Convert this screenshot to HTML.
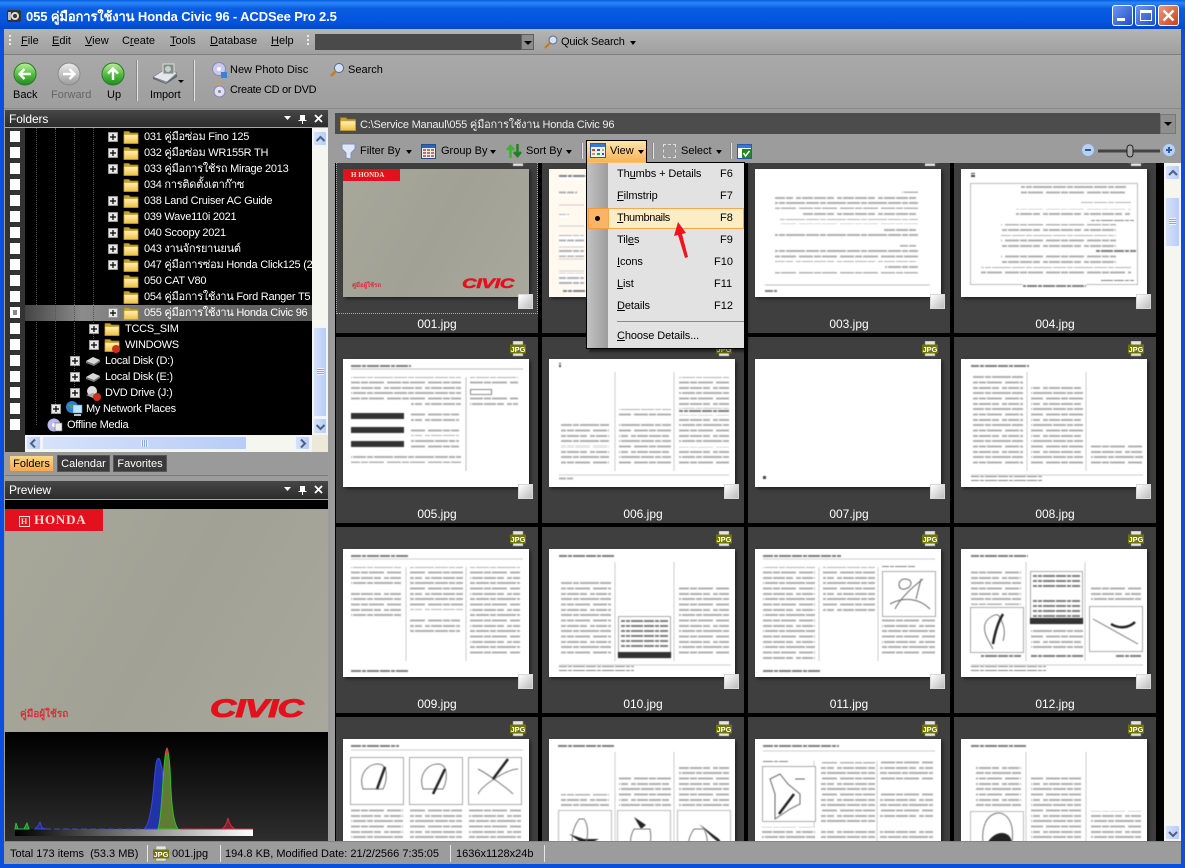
<!DOCTYPE html>
<html><head><meta charset="utf-8"><title>055 คู่มือการใช้งาน Honda Civic 96 - ACDSee Pro 2.5</title>
<style>
html,body{margin:0;padding:0;width:1185px;height:868px;overflow:hidden;background:#9c9c9c;font-family:"Liberation Sans","DejaVu Sans","Noto Sans CJK SC",sans-serif;font-size:11px}
div,span,svg{box-sizing:border-box}
.a{position:absolute}
.l{position:absolute;white-space:nowrap;line-height:14px;color:#000}
.w{color:#fff}
u{text-decoration:underline}
.hd{position:absolute;background:linear-gradient(#474747,#2c2c2c);border-bottom:1px solid #aaa;color:#fff;line-height:18px;padding-left:4px;font-size:12px;letter-spacing:-.1px}
.cell{position:absolute;width:202px;height:186px;background:#3f3f3f}
.pg{position:absolute;left:7px;top:22px;width:186px;height:128px;background:#fff;box-shadow:2px 2px 3px #222;display:block}
svg.pg>*{filter:blur(.4px)}
.ck{position:absolute;left:182px;top:147px;width:15px;height:15px;background:linear-gradient(135deg,#fff,#bcbcbc);border:1px solid #d8d8d8}
.lb{position:absolute;left:0;width:202px;top:170px;text-align:center;color:#fff;line-height:14px;font-size:12px}
.bd{position:absolute;left:174px;top:4px;width:16px;height:16px}
.tc{position:absolute;left:10px;width:10px;height:11px;background:#fff}
.tx{position:absolute;white-space:nowrap;color:#fff;line-height:16px;height:16px;letter-spacing:-.25px}
.ic{position:absolute;width:16px;height:14px}
.pl{position:absolute;width:10px;height:10px}
.sb{background:linear-gradient(90deg,#d6e2fb,#b8ccf6);border:1px solid #eef3fe;border-radius:2px}
.mi{position:absolute;left:617px;white-space:nowrap;line-height:14px;color:#000;letter-spacing:-.1px}
.ms{position:absolute;white-space:nowrap;line-height:14px;color:#000}
.sep{position:absolute;width:2px;background:#e4e4e4;border-left:1px solid #888}
</style></head><body>
<svg width="0" height="0" style="position:absolute"><defs>
<pattern id="t" width="41" height="16" patternUnits="userSpaceOnUse"><rect width="41" height="16" fill="#fff"/><path d="M0 2h9M10 2h13M24 2h6M31 2h10M3 7.500h14M18 7.500h7M26 7.500h15M0 13h5M6 13h11M18 13h12M31 13h7" stroke="#b0b0b0" stroke-width="2" fill="none"/></pattern>
<pattern id="d" width="29" height="5" patternUnits="userSpaceOnUse"><rect width="29" height="5" fill="#fff"/><path d="M0 2h7M8 2h10M19 2h4M24 2h5" stroke="#808080" stroke-width="2" fill="none"/></pattern>
<pattern id="h" width="5" height="3" patternUnits="userSpaceOnUse"><rect width="5" height="3" fill="#fff"/><rect y="0" width="4" height="2" fill="#444"/></pattern>
<linearGradient id="fg" x1="0" y1="0" x2="0" y2="1"><stop offset="0" stop-color="#fff4bc"/><stop offset="1" stop-color="#f0c040"/></linearGradient>
<linearGradient id="gb" x1="0" y1="0" x2="0" y2="1"><stop offset="0" stop-color="#bdf0a0"/><stop offset=".5" stop-color="#55c040"/><stop offset="1" stop-color="#1f8a22"/></linearGradient>
<linearGradient id="gg" x1="0" y1="0" x2="0" y2="1"><stop offset="0" stop-color="#ececec"/><stop offset="1" stop-color="#9b9b9b"/></linearGradient>
<symbol id="fo" viewBox="0 0 16 14"><path d="M1 1.500h5l1.500 1.500H15v10H1z" fill="#c9a032" stroke="#9a7a20" stroke-width=".7"/><path d="M1 4.500h14v9H1z" fill="url(#fg)" stroke="#c89f30" stroke-width=".7"/></symbol>
<symbol id="pb" viewBox="0 0 10 10"><rect x=".5" y=".5" width="9" height="9" fill="#e8e8e8" stroke="#9a9a9a"/><path d="M2 5h6M5 2v6" stroke="#000" stroke-width="1.200"/></symbol>
<symbol id="jp" viewBox="0 0 16 16"><rect x="3" y="0" width="10" height="15" fill="#e4e4e4" stroke="#8a8a8a" stroke-width=".6"/><rect x="0" y="3.500" width="16" height="9" fill="#727400"/><text x="8" y="11" font-family="Liberation Sans" font-weight="bold" font-size="7.500" fill="#fff" text-anchor="middle">JPG</text></symbol>
<symbol id="dk" viewBox="0 0 16 10"><path d="M1 5l7-4 7 3-6 5z" fill="#d8d8d8"/><path d="M1 5l8 3 6-4v2l-6 4-8-3z" fill="#777"/></symbol>
</defs></svg>

<!-- title bar -->
<div class="a" style="left:0;top:0;width:1185px;height:29px;background:linear-gradient(#0a5fe0,#2a86f7 10%,#0a5ce0 30%,#0354e0 75%,#0447c8)"></div>
<div class="a" style="left:0;top:29px;width:4px;height:839px;background:#0a50e0"></div>
<div class="a" style="left:1181px;top:29px;width:4px;height:839px;background:#0a50e0"></div>
<div class="a" style="left:0;top:864px;width:1185px;height:4px;background:#0a50e0"></div>
<svg class="a" style="left:6px;top:8px" width="16" height="16"><rect x="1" y="2" width="14" height="12" rx="2" fill="#333"/><circle cx="9" cy="8" r="4" fill="#ddd"/><circle cx="9" cy="8" r="2" fill="#333"/><rect x="2" y="4" width="3" height="8" fill="#bbb"/></svg>
<div class="l w" style="left:26px;top:8px;font-size:13px;font-weight:bold;line-height:17px;letter-spacing:-.12px">055 คู่มือการใช้งาน Honda Civic 96 - ACDSee Pro 2.5</div>
<div class="a" style="left:1112px;top:5px;width:21px;height:21px;border:1px solid #fff;border-radius:3px;background:linear-gradient(135deg,#6e96ee,#2050c8)"><div class="a" style="left:4px;top:12px;width:8px;height:3px;background:#fff"></div></div>
<div class="a" style="left:1135px;top:5px;width:21px;height:21px;border:1px solid #fff;border-radius:3px;background:linear-gradient(135deg,#6e96ee,#2050c8)"><div class="a" style="left:4px;top:4px;width:12px;height:11px;border:1px solid #fff;border-top-width:3px"></div></div>
<div class="a" style="left:1158px;top:5px;width:21px;height:21px;border:1px solid #fff;border-radius:3px;background:linear-gradient(135deg,#ee9a80,#c8401c)"><svg class="a" style="left:3px;top:3px" width="13" height="13"><path d="M1.500 1.500l10 10M11.500 1.500l-10 10" stroke="#fff" stroke-width="2.400"/></svg></div>

<!-- menu bar -->
<div class="a" style="left:4px;top:29px;width:1177px;height:26px;background:linear-gradient(#b5b5b5,#9f9f9f);border-bottom:1px solid #7f7f7f"></div>
<div class="a" style="left:9px;top:35px;width:2px;height:11px;background:repeating-linear-gradient(#eee 0 2px,transparent 2px 4px)"></div>
<div class="a" style="left:307px;top:35px;width:2px;height:11px;background:repeating-linear-gradient(#eee 0 2px,transparent 2px 4px)"></div>
<div class="l" style="left:21px;top:34px"><u>F</u>ile</div>
<div class="l" style="left:52px;top:34px"><u>E</u>dit</div>
<div class="l" style="left:85px;top:34px"><u>V</u>iew</div>
<div class="l" style="left:122px;top:34px">C<u>r</u>eate</div>
<div class="l" style="left:170px;top:34px"><u>T</u>ools</div>
<div class="l" style="left:210px;top:34px"><u>D</u>atabase</div>
<div class="l" style="left:271px;top:34px"><u>H</u>elp</div>
<div class="a" style="left:315px;top:34px;width:206px;height:16px;background:#4a4a4a"></div>
<div class="a" style="left:521px;top:34px;width:13px;height:16px;background:#8c8c8c;border:1px solid #5f5f5f"><div class="a" style="left:2px;top:6px;border:4px solid transparent;border-top:4px solid #000;border-bottom:0"></div></div>
<svg class="a" style="left:543px;top:34px" width="16" height="16"><circle cx="10" cy="6" r="4" fill="#cfe3ff" stroke="#667" stroke-width="1"/><path d="M7 9l-5 5" stroke="#c08020" stroke-width="2.400"/></svg>
<div class="l" style="left:561px;top:35px;letter-spacing:-.2px">Quick Search</div>
<div class="a" style="left:630px;top:41px;border:3.500px solid transparent;border-top:4px solid #000;border-bottom:0"></div>

<!-- main toolbar -->
<div class="a" style="left:4px;top:55px;width:1177px;height:54px;background:linear-gradient(#a9a9a9,#9e9e9e);border-bottom:1px solid #8a8a8a"></div>
<svg class="a" style="left:12px;top:61px" width="26" height="26"><circle cx="13" cy="13" r="11" fill="url(#gb)" stroke="#2a7a28"/><path d="M19 13H8M12.500 8L7.500 13l5 5" fill="none" stroke="#fff" stroke-width="2.400"/></svg>
<svg class="a" style="left:56px;top:61px" width="26" height="26"><circle cx="13" cy="13" r="11" fill="url(#gg)" stroke="#8a8a8a"/><path d="M7 13h11M13.500 8l5 5-5 5" fill="none" stroke="#fff" stroke-width="2.400"/></svg>
<svg class="a" style="left:100px;top:61px" width="26" height="26"><circle cx="13" cy="13" r="11" fill="url(#gb)" stroke="#2a7a28"/><path d="M13 19V8M8 12.500l5-5 5 5" fill="none" stroke="#fff" stroke-width="2.400"/></svg>
<div class="l" style="left:13px;top:88px">Back</div>
<div class="l" style="left:51px;top:88px;color:#666">Forward</div>
<div class="l" style="left:107px;top:88px">Up</div>
<div class="sep" style="left:136px;top:60px;height:41px"></div>
<svg class="a" style="left:151px;top:62px" width="34" height="26"><path d="M2 15l14-9 10 5-10 9z" fill="#e4e8ec" stroke="#778" stroke-width=".6"/><path d="M2 15l13 6 11-9v3l-11 7-13-5z" fill="#5e6a70"/><rect x="12" y="2" width="11" height="10" fill="#7f8f8a" stroke="#ddd"/><circle cx="17" cy="7" r="3" fill="#ccc"/></svg>
<div class="a" style="left:178px;top:80px;border:3px solid transparent;border-top:3px solid #000;border-bottom:0"></div>
<div class="l" style="left:150px;top:88px;letter-spacing:-.1px">Import</div>
<div class="sep" style="left:193px;top:60px;height:41px"></div>
<svg class="a" style="left:211px;top:62px" width="16" height="16"><circle cx="8" cy="7" r="6.500" fill="#c8c8f0" stroke="#8888b0"/><circle cx="8" cy="7" r="2" fill="#fff"/><rect x="10" y="10" width="6" height="6" fill="#4080d0"/></svg>
<div class="l" style="left:230px;top:63px">New Photo Disc</div>
<svg class="a" style="left:329px;top:62px" width="16" height="16"><circle cx="10" cy="6" r="4.500" fill="#cfe3ff" stroke="#667"/><path d="M7 9l-5 5" stroke="#c08020" stroke-width="2.600"/></svg>
<div class="l" style="left:348px;top:63px">Search</div>
<svg class="a" style="left:212px;top:82px" width="15" height="16"><circle cx="7.500" cy="9.500" r="5.500" fill="#e0e0f4" stroke="#8888b0"/><circle cx="7.500" cy="9.500" r="1.500" fill="#889"/><path d="M7 0l1.500 4-3-.5z" fill="#e8a020"/></svg>
<div class="l" style="left:230px;top:83px;letter-spacing:-.3px">Create CD or DVD</div>

<!-- left panel -->
<div class="hd" style="left:5px;top:110px;width:323px;height:18px">Folders</div>
<svg class="a" style="left:284px;top:113px" width="44" height="13"><path d="M0 3h7l-3.500 4z" fill="#fff"/><path d="M16 2h5v5h1.500v1H19v3h-1V8h-3.500V7H16z" fill="#fff"/><path d="M31 2l7 7M38 2l-7 7" stroke="#fff" stroke-width="1.800"/></svg>
<div class="a" style="left:5px;top:128px;width:20px;height:307px;background:#333"></div>
<div class="a" style="left:5px;top:435px;width:20px;height:17px;background:#333"></div>
<div class="a" style="left:25px;top:128px;width:287px;height:307px;background:#000"></div>
<div class="a" style="left:25px;top:305px;width:287px;height:16px;background:linear-gradient(90deg,#444,#8c8c8c 20%,#6a6a6a 50%,#5c5c5c)"></div>
<div class="a" style="left:55px;top:128px;width:1px;height:280px;border-left:1px dotted #555"></div>
<div class="a" style="left:74px;top:128px;width:1px;height:265px;border-left:1px dotted #555"></div>
<div class="a" style="left:93px;top:128px;width:1px;height:217px;border-left:1px dotted #555"></div>
<div class="a" style="left:36px;top:128px;width:1px;height:297px;border-left:1px dotted #555"></div>

<div class="tc" style="top:131px"></div><div class="tc" style="top:147px"></div><div class="tc" style="top:163px"></div><div class="tc" style="top:179px"></div><div class="tc" style="top:195px"></div><div class="tc" style="top:211px"></div><div class="tc" style="top:227px"></div><div class="tc" style="top:243px"></div><div class="tc" style="top:259px"></div><div class="tc" style="top:275px"></div><div class="tc" style="top:291px"></div>
<div class="tc" style="top:307px"><div class="a" style="left:3px;top:3px;width:4px;height:5px;background:#888"></div></div>
<div class="tc" style="top:323px"></div><div class="tc" style="top:339px"></div><div class="tc" style="top:355px"></div><div class="tc" style="top:371px"></div><div class="tc" style="top:387px"></div><div class="tc" style="top:403px"></div><div class="tc" style="top:419px"></div>

<svg class="pl" style="left:108px;top:132px"><use href="#pb"/></svg><svg class="ic" style="left:123px;top:130px"><use href="#fo"/></svg><div class="tx" style="left:144px;top:129px">031 คู่มือซ่อม Fino 125</div>
<svg class="pl" style="left:108px;top:148px"><use href="#pb"/></svg><svg class="ic" style="left:123px;top:146px"><use href="#fo"/></svg><div class="tx" style="left:144px;top:145px">032 คู่มือซ่อม WR155R TH</div>
<svg class="pl" style="left:108px;top:164px"><use href="#pb"/></svg><svg class="ic" style="left:123px;top:162px"><use href="#fo"/></svg><div class="tx" style="left:144px;top:161px">033 คู่มือการใช้รถ Mirage 2013</div>
<svg class="ic" style="left:123px;top:178px"><use href="#fo"/></svg><div class="tx" style="left:144px;top:177px">034 การติดตั้งเตาก๊าซ</div>
<svg class="pl" style="left:108px;top:196px"><use href="#pb"/></svg><svg class="ic" style="left:123px;top:194px"><use href="#fo"/></svg><div class="tx" style="left:144px;top:193px">038 Land Cruiser AC Guide</div>
<svg class="pl" style="left:108px;top:212px"><use href="#pb"/></svg><svg class="ic" style="left:123px;top:210px"><use href="#fo"/></svg><div class="tx" style="left:144px;top:209px">039 Wave110i 2021</div>
<svg class="pl" style="left:108px;top:228px"><use href="#pb"/></svg><svg class="ic" style="left:123px;top:226px"><use href="#fo"/></svg><div class="tx" style="left:144px;top:225px">040 Scoopy 2021</div>
<svg class="pl" style="left:108px;top:244px"><use href="#pb"/></svg><svg class="ic" style="left:123px;top:242px"><use href="#fo"/></svg><div class="tx" style="left:144px;top:241px">043 งานจักรยานยนต์</div>
<svg class="pl" style="left:108px;top:260px"><use href="#pb"/></svg><svg class="ic" style="left:123px;top:258px"><use href="#fo"/></svg><div class="tx" style="left:144px;top:257px;width:168px;overflow:hidden">047 คู่มือการซ่อม Honda Click125 (2</div>
<svg class="ic" style="left:123px;top:274px"><use href="#fo"/></svg><div class="tx" style="left:144px;top:273px">050 CAT V80</div>
<svg class="ic" style="left:123px;top:290px"><use href="#fo"/></svg><div class="tx" style="left:144px;top:289px;width:168px;overflow:hidden">054 คู่มือการใช้งาน Ford Ranger T5</div>
<svg class="pl" style="left:108px;top:308px"><use href="#pb"/></svg><svg class="ic" style="left:123px;top:306px"><use href="#fo"/></svg><div class="tx" style="left:144px;top:305px">055 คู่มือการใช้งาน Honda Civic 96</div>
<svg class="pl" style="left:89px;top:324px"><use href="#pb"/></svg><svg class="ic" style="left:104px;top:322px"><use href="#fo"/></svg><div class="tx" style="left:125px;top:321px">TCCS_SIM</div>
<svg class="pl" style="left:89px;top:340px"><use href="#pb"/></svg><svg class="ic" style="left:104px;top:338px"><use href="#fo"/></svg><div class="a" style="left:112px;top:345px;width:8px;height:8px;border-radius:50%;background:#d03018"></div><div class="tx" style="left:125px;top:337px">WINDOWS</div>
<svg class="pl" style="left:70px;top:356px"><use href="#pb"/></svg><svg class="ic" style="left:85px;top:356px;height:10px"><use href="#dk"/></svg><div class="tx" style="left:105px;top:353px">Local Disk (D:)</div>
<svg class="pl" style="left:70px;top:372px"><use href="#pb"/></svg><svg class="ic" style="left:85px;top:372px;height:10px"><use href="#dk"/></svg><div class="tx" style="left:105px;top:369px">Local Disk (E:)</div>
<svg class="pl" style="left:70px;top:388px"><use href="#pb"/></svg><svg class="a" style="left:85px;top:385px" width="16" height="16"><circle cx="7" cy="6" r="5" fill="#ddd"/><path d="M1 10l7-2 6 2-6 3z" fill="#aaa"/><circle cx="12" cy="12" r="4" fill="#d03018"/></svg><div class="tx" style="left:105px;top:385px">DVD Drive (J:)</div>
<svg class="pl" style="left:51px;top:404px"><use href="#pb"/></svg><svg class="a" style="left:65px;top:400px" width="18" height="18"><circle cx="7" cy="7" r="6" fill="#2f7fd0"/><path d="M3 4l5 1-2 4z" fill="#3fb040"/><rect x="8" y="5" width="9" height="8" fill="#bfe6ff" stroke="#5a90c0" stroke-width=".6"/><rect x="9" y="14" width="7" height="2" fill="#c0c0c0"/></svg><div class="tx" style="left:86px;top:401px">My Network Places</div>
<svg class="a" style="left:47px;top:417px" width="16" height="16"><circle cx="7" cy="8" r="6.500" fill="#b8b8ea"/><circle cx="7" cy="8" r="2" fill="#fff"/><rect x="8" y="6" width="7" height="8" fill="#eee" stroke="#667" stroke-width=".6"/></svg><div class="tx" style="left:67px;top:417px">Offline Media</div>

<!-- tree scrollbars -->
<div class="a" style="left:312px;top:128px;width:16px;height:307px;background:#f6f6f0"></div>
<div class="a sb" style="left:313px;top:131px;width:14px;height:15px"><svg class="a" style="left:1px;top:3px" width="11" height="8"><path d="M1.500 6L5.500 2l4 4" fill="none" stroke="#4d6185" stroke-width="2"/></svg></div>
<div class="a sb" style="left:313px;top:327px;width:14px;height:90px"><div class="a" style="left:3px;top:40px;width:7px;height:7px;background:repeating-linear-gradient(#eef3fe 0 1px,#8ea6d8 1px 2px)"></div></div>
<div class="a sb" style="left:313px;top:418px;width:14px;height:16px"><svg class="a" style="left:1px;top:4px" width="11" height="8"><path d="M1.500 2l4 4 4-4" fill="none" stroke="#4d6185" stroke-width="2"/></svg></div>
<div class="a" style="left:25px;top:435px;width:303px;height:17px;background:#f6f6f0"></div>
<div class="a sb" style="left:26px;top:436px;width:15px;height:14px"><svg class="a" style="left:2px;top:1px" width="8" height="11"><path d="M6 1.500l-4 4 4 4" fill="none" stroke="#4d6185" stroke-width="2"/></svg></div>
<div class="a sb" style="left:42px;top:436px;width:205px;height:14px"><div class="a" style="left:98px;top:3px;width:7px;height:7px;background:repeating-linear-gradient(90deg,#eef3fe 0 1px,#8ea6d8 1px 2px)"></div></div>
<div class="a sb" style="left:295px;top:436px;width:15px;height:14px"><svg class="a" style="left:3px;top:1px" width="8" height="11"><path d="M2 1.500l4 4-4 4" fill="none" stroke="#4d6185" stroke-width="2"/></svg></div>
<div class="a" style="left:312px;top:435px;width:16px;height:17px;background:#ece9d8"></div>

<div class="a" style="left:5px;top:452px;width:323px;height:24px;background:#9a9a9a;border-bottom:1px solid #7d7d7d"></div>
<div class="l" style="left:9px;top:455px;width:45px;height:17px;background:linear-gradient(#ffd68a,#f7a94a);border:1px solid #c89040;text-align:center;line-height:16px">Folders</div>
<div class="l w" style="left:57px;top:455px;width:53px;height:17px;background:#3a3a3a;border:1px solid #555;text-align:center;line-height:16px">Calendar</div>
<div class="l w" style="left:113px;top:455px;width:54px;height:17px;background:#3a3a3a;border:1px solid #555;text-align:center;line-height:16px">Favorites</div>

<!-- preview -->
<div class="hd" style="left:5px;top:481px;width:323px;height:19px;line-height:19px">Preview</div>
<svg class="a" style="left:284px;top:484px" width="44" height="13"><path d="M0 3h7l-3.500 4z" fill="#fff"/><path d="M16 2h5v5h1.500v1H19v3h-1V8h-3.500V7H16z" fill="#fff"/><path d="M31 2l7 7M38 2l-7 7" stroke="#fff" stroke-width="1.800"/></svg>
<div class="a" style="left:5px;top:500px;width:323px;height:341px;background:#000;overflow:hidden">
  <div class="a" style="left:0;top:9px;width:323px;height:223px;background:linear-gradient(120deg,#a7a79a,#a1a195 50%,#a8a89c)"></div>
  <div class="a" style="left:0;top:9px;width:98px;height:22px;background:#e3111d"></div>
  <div class="l" style="left:14px;top:13px;font-family:'Liberation Serif';font-weight:bold;font-size:13px;color:#f8dcd0;letter-spacing:.8px"><span style="border:1px solid #f8dcd0;padding:0 1px;font-size:8px">H</span> HONDA</div>
  <div class="l" style="left:205px;top:195px;font-size:25px;line-height:28px;font-weight:bold;font-style:italic;color:#e3111d;-webkit-text-stroke:1px #e3111d;transform:scaleX(1.45);transform-origin:0 0;letter-spacing:-.5px">CIVIC</div>
  <div class="l" style="left:15px;top:208px;color:#d8303a;font-size:10px;font-weight:bold">คู่มือผู้ใช้รถ</div>
  <svg class="a" style="left:0;top:232px" width="323" height="109">
    <defs><linearGradient id="hb" x1="0" y1="0" x2="0" y2="1"><stop offset="0" stop-color="#000"/><stop offset="1" stop-color="#2e2e2e"/></linearGradient><linearGradient id="hg"><stop offset="0" stop-color="#000"/><stop offset="1" stop-color="#fff"/></linearGradient></defs>
    <rect width="323" height="109" fill="url(#hb)"/>
    <rect x="10" y="97" width="238" height="7" fill="url(#hg)"/>
    <path d="M139 97c4-3 7-15 9-35 2-18 2-30 4-34s3-1 5 8c2 18 2 45 6 61z" fill="#2232a8" stroke="#3a48e0"/>
    <path d="M153 97c3-10 4-35 6-62 1-12 2-19 3-19s2 8 3 20c1 27 2 52 8 61z" fill="#5f7c30" stroke="#30c030"/>
    <path d="M162 15l-2 6h4z" fill="#e03030"/>
    <path d="M217 97c3-2 5-6 6-11 1 5 3 9 7 11z" fill="#802030" stroke="#d03040"/>
    <path d="M10 97l1-6 2 6h6l3-6 2 6z" fill="#208030" stroke="#30c040"/>
    <path d="M30 97l3-3 2-4 2 6 4 1z" fill="#223088" stroke="#3a48d0"/>
    <path d="M40 97h100" stroke="#3a48d0" stroke-dasharray="6 3"/>
    <path d="M175 97h45M228 97h20" stroke="#c03040"/>
  </svg>
</div>

<!-- address bar -->
<div class="a" style="left:335px;top:113px;width:825px;height:21px;background:#4c4c4c"></div>
<svg class="a" style="left:339px;top:116px;width:18px;height:15px"><use href="#fo"/></svg>
<div class="l" style="left:360px;top:118px;color:#eee;letter-spacing:-.2px">C:\Service Manaul\055 คู่มือการใช้งาน Honda Civic 96</div>
<div class="a" style="left:1160px;top:114px;width:16px;height:20px;background:#8f8f8f;border:1px solid #777"><div class="a" style="left:3px;top:7px;border:4px solid transparent;border-top:4px solid #000;border-bottom:0"></div></div>

<!-- view toolbar -->
<svg class="a" style="left:341px;top:143px" width="15" height="17"><path d="M1 1h13v5l-4 4v6l-5-1v-5L1 6z" fill="#dfe7f8" stroke="#7f90c0"/></svg>
<div class="l" style="left:360px;top:144px">Filter By</div>
<div class="a" style="left:406px;top:150px;border:3.500px solid transparent;border-top:4px solid #000;border-bottom:0"></div>
<svg class="a" style="left:421px;top:144px" width="15" height="15"><rect x=".5" y=".5" width="14" height="14" fill="#e8f0ff" stroke="#2a4a90"/><rect x="1" y="1" width="13" height="3" fill="#3060c0"/><path d="M2 6h11M2 9h11M2 12h11" stroke="#c04020" stroke-width="1.500" stroke-dasharray="3 1"/></svg>
<div class="l" style="left:441px;top:144px">Group By</div>
<div class="a" style="left:490px;top:150px;border:3.500px solid transparent;border-top:4px solid #000;border-bottom:0"></div>
<svg class="a" style="left:506px;top:143px" width="16" height="16"><path d="M4.500 15V5M1 7l3.500-4L8 7" fill="none" stroke="#40b030" stroke-width="2.500"/><path d="M11.500 1v10M8 9l3.500 4L15 9" fill="none" stroke="#20801c" stroke-width="2.500"/></svg>
<div class="l" style="left:526px;top:144px">Sort By</div>
<div class="a" style="left:566px;top:150px;border:3.500px solid transparent;border-top:4px solid #000;border-bottom:0"></div>
<div class="sep" style="left:581px;top:143px;height:16px"></div>
<div class="a" style="left:586px;top:140px;width:61px;height:23px;background:linear-gradient(#ffe6b0,#f8b050);border:1px solid #000;border-bottom:0"></div>
<svg class="a" style="left:590px;top:143px" width="16" height="15"><rect x=".5" y=".5" width="15" height="14" fill="#eaf2ff" stroke="#2a5ab0"/><rect x="1" y="1" width="14" height="3" fill="#3878d0"/><rect x="2" y="6" width="3" height="2" fill="#e04020"/><rect x="7" y="6" width="3" height="2" fill="#2060c0"/><rect x="12" y="6" width="2" height="2" fill="#e0a020"/><rect x="2" y="10" width="3" height="2" fill="#e0a020"/><rect x="7" y="10" width="3" height="2" fill="#30a030"/><rect x="12" y="10" width="2" height="2" fill="#2060c0"/></svg>
<div class="l" style="left:610px;top:144px">View</div>
<div class="a" style="left:638px;top:150px;border:3.500px solid transparent;border-top:4px solid #000;border-bottom:0"></div>
<div class="sep" style="left:652px;top:143px;height:16px"></div>
<div class="a" style="left:663px;top:144px;width:13px;height:14px;border:1px dashed #ddd"></div>
<div class="l" style="left:681px;top:144px">Select</div>
<div class="a" style="left:716px;top:150px;border:3.500px solid transparent;border-top:4px solid #000;border-bottom:0"></div>
<div class="sep" style="left:730px;top:143px;height:16px"></div>
<svg class="a" style="left:737px;top:144px" width="15" height="15"><rect x=".5" y=".5" width="14" height="14" fill="#fff" stroke="#2a5ab0"/><rect x="1" y="1" width="13" height="3" fill="#3878d0"/><rect x="5" y="5" width="9" height="9" fill="#1f8a22"/><path d="M6.500 9l2 3 4-5" fill="none" stroke="#fff" stroke-width="1.500"/></svg>
<svg class="a" style="left:1080px;top:142px" width="100" height="17"><circle cx="8" cy="8" r="6.500" fill="#bcd0ec" stroke="#8aa0c0"/><path d="M5 8h6" stroke="#1f5fa8" stroke-width="2"/><path d="M18 9h62" stroke="#444" stroke-width="3"/><rect x="47" y="3" width="6" height="12" rx="3" fill="#a8a8a8" stroke="#222"/><circle cx="89" cy="8" r="6.500" fill="#bcd0ec" stroke="#8aa0c0"/><path d="M86 8h6M89 5v6" stroke="#1f5fa8" stroke-width="2"/></svg>

<!-- grid -->
<div class="a" style="left:335px;top:163px;width:829px;height:678px;background:#000;overflow:hidden">
<div class="cell" style="left:1px;top:-16px"><div class="pg" style="background:linear-gradient(120deg,#a7a79a,#a1a195 50%,#a8a89c)"><div class="a" style="left:0;top:0;width:57px;height:12px;background:#e3111d"></div><div class="l" style="left:8px;top:0;color:#f8dcd0;font-family:'Liberation Serif';font-weight:bold;font-size:7px;line-height:12px">H HONDA</div><div class="l" style="left:119px;top:106px;font-size:14px;line-height:16px;font-weight:bold;font-style:italic;color:#e3111d;-webkit-text-stroke:.5px #e3111d;transform:scaleX(1.450);transform-origin:0 0;letter-spacing:-.3px">CIVIC</div><div class="l" style="left:9px;top:112px;color:#d8303a;font-size:6px;line-height:10px;font-weight:bold">คู่มือผู้ใช้รถ</div></div><div class="a" style="left:0;top:0;width:202px;height:167px;border:1px dotted #aaa"></div><svg class="bd"><use href="#jp"/></svg><div class="ck"></div><div class="lb">001.jpg</div></div>

<div class="cell" style="left:207px;top:-16px"><svg class="pg" viewBox="0 0 186 128" style="background:#fff9ef"><rect x="10" y="6" width="28" height="5" fill="url(#d)"/><rect x="10" y="22" width="18" height="4" fill="url(#t)"/><path d="M10 36h25M10 57h25M10 78h25M10 90h25M10 102h25" stroke="#ccc"/><rect x="10" y="45" width="10" height="4" fill="url(#t)"/><rect x="10" y="66" width="25" height="10" fill="url(#t)"/><rect x="10" y="80" width="25" height="8" fill="url(#t)"/><rect x="10" y="104" width="25" height="12" fill="url(#t)"/><rect x="14" y="120" width="22" height="4" fill="url(#d)"/></svg><svg class="bd"><use href="#jp"/></svg><div class="ck"></div><div class="lb">002.jpg</div></div>

<div class="cell" style="left:413px;top:-16px"><svg class="pg" viewBox="0 0 186 128"><rect x="147" y="19" width="16" height="5" fill="url(#t)"/><rect x="20" y="25" width="143" height="15" fill="url(#t)"/><rect x="48" y="44" width="115" height="5" fill="url(#t)"/><rect x="25" y="50" width="138" height="5" fill="url(#t)"/><rect x="128" y="60" width="35" height="5" fill="url(#t)"/><rect x="20" y="64" width="143" height="5" fill="url(#t)"/><rect x="145" y="74" width="18" height="4" fill="url(#t)"/><rect x="20" y="78" width="143" height="15" fill="url(#t)"/><rect x="130" y="97" width="33" height="4" fill="url(#t)"/><rect x="20" y="103" width="143" height="5" fill="url(#t)"/><path d="M10 116h165" stroke="#bbb"/><rect x="10" y="118" width="12" height="5" fill="url(#d)"/></svg><svg class="bd"><use href="#jp"/></svg><div class="ck"></div><div class="lb">003.jpg</div></div>

<div class="cell" style="left:619px;top:-16px"><svg class="pg" viewBox="0 0 186 128"><rect x="9" y="4" width="6" height="4" fill="url(#h)"/><rect x="9.500" y="14.500" width="167" height="101" fill="none" stroke="#bbb"/><rect x="60" y="16" width="105" height="10" fill="url(#t)"/><rect x="120" y="30" width="50" height="4" fill="url(#t)"/><rect x="55" y="40" width="115" height="9" fill="url(#t)"/><rect x="130" y="48" width="43" height="4" fill="url(#d)"/><rect x="40" y="55" width="115" height="9" fill="url(#t)"/><rect x="40" y="66" width="115" height="14" fill="url(#t)"/><rect x="135" y="80" width="40" height="4" fill="url(#d)"/><rect x="40" y="86" width="115" height="10" fill="url(#t)"/><rect x="20" y="98" width="150" height="10" fill="url(#t)"/><rect x="140" y="108" width="33" height="4" fill="url(#d)"/><rect x="62" y="113" width="63" height="6" fill="#fff"/><rect x="62" y="114" width="63" height="5" fill="url(#d)"/></svg><svg class="bd"><use href="#jp"/></svg><div class="ck"></div><div class="lb">004.jpg</div></div>

<div class="cell" style="left:1px;top:174px"><svg class="pg" viewBox="0 0 186 128"><rect x="8" y="5" width="60" height="5" fill="url(#d)"/><path d="M8 10h172" stroke="#bbb"/><rect x="8" y="18" width="110" height="26" fill="url(#t)"/><rect x="68" y="44" width="50" height="5" fill="url(#t)"/><rect x="8" y="54" width="53" height="6" fill="#333"/><rect x="8" y="68" width="53" height="6" fill="#333"/><rect x="8" y="82" width="53" height="6" fill="#333"/><rect x="68" y="53" width="48" height="10" fill="url(#t)"/><rect x="68" y="67" width="48" height="10" fill="url(#t)"/><rect x="68" y="81" width="48" height="10" fill="url(#t)"/><rect x="8" y="94" width="110" height="10" fill="url(#t)"/><path d="M123 18v94" stroke="#bbb"/><rect x="127" y="18" width="48" height="9" fill="url(#t)"/><rect x="127.500" y="30.500" width="21" height="5" fill="none" stroke="#888"/><rect x="127" y="38" width="48" height="10" fill="url(#t)"/></svg><svg class="bd"><use href="#jp"/></svg><div class="ck"></div><div class="lb">005.jpg</div></div>

<div class="cell" style="left:207px;top:174px"><svg class="pg" viewBox="0 0 186 128"><rect x="9" y="4" width="3" height="4" fill="url(#h)"/><path d="M66 13v99M125 13v99M10 116h170" stroke="#ccc"/><rect x="130" y="18" width="50" height="32" fill="url(#t)"/><rect x="130" y="50" width="50" height="5" fill="url(#d)"/><rect x="130" y="56" width="50" height="30" fill="url(#t)"/><rect x="130" y="88" width="50" height="20" fill="url(#t)"/><rect x="70" y="50" width="52" height="10" fill="url(#t)"/><rect x="70" y="62" width="52" height="45" fill="url(#t)"/><rect x="12" y="62" width="48" height="25" fill="url(#t)"/><rect x="12" y="88" width="48" height="20" fill="url(#t)"/><rect x="10" y="118" width="14" height="5" fill="url(#t)"/></svg><svg class="bd"><use href="#jp"/></svg><div class="ck"></div><div class="lb">006.jpg</div></div>

<div class="cell" style="left:413px;top:174px"><svg class="pg" viewBox="0 0 186 128"><rect x="8" y="117" width="3" height="3" fill="#444"/></svg><svg class="bd"><use href="#jp"/></svg><div class="ck"></div><div class="lb">007.jpg</div></div>

<div class="cell" style="left:619px;top:174px"><svg class="pg" viewBox="0 0 186 128"><rect x="10" y="5" width="58" height="5" fill="url(#d)"/><path d="M66 13v99M125 13v99M10 116h172" stroke="#ccc"/><rect x="12" y="15" width="50" height="92" fill="url(#t)"/><rect x="70" y="25" width="52" height="82" fill="url(#t)"/><rect x="130" y="84" width="52" height="22" fill="url(#t)"/><rect x="10" y="117" width="72" height="5" fill="url(#d)"/></svg><svg class="bd"><use href="#jp"/></svg><div class="ck"></div><div class="lb">008.jpg</div></div>

<div class="cell" style="left:1px;top:364px"><svg class="pg" viewBox="0 0 186 128"><rect x="8" y="5" width="58" height="5" fill="url(#d)"/><path d="M8 10h172M63 18v94M123 18v94" stroke="#ccc"/><rect x="8" y="18" width="50" height="18" fill="url(#t)"/><rect x="8" y="44" width="50" height="24" fill="url(#t)"/><rect x="67" y="18" width="53" height="43" fill="url(#t)"/><rect x="67" y="68" width="50" height="15" fill="url(#t)"/><rect x="127" y="18" width="50" height="87" fill="url(#t)"/><rect x="8" y="118" width="58" height="5" fill="url(#d)"/></svg><svg class="bd"><use href="#jp"/></svg><div class="ck"></div><div class="lb">009.jpg</div></div>

<div class="cell" style="left:207px;top:364px"><svg class="pg" viewBox="0 0 186 128"><rect x="10" y="4" width="56" height="5" fill="url(#d)"/><path d="M66 13v99M125 13v99M10 116h172" stroke="#ccc"/><rect x="12" y="30" width="50" height="78" fill="url(#t)"/><rect x="69.500" y="67.500" width="52" height="41" fill="#fff" stroke="#aaa"/><rect x="72" y="70" width="47" height="30" fill="url(#d)"/><rect x="69" y="103" width="53" height="6" fill="#333"/><rect x="130" y="36" width="50" height="72" fill="url(#t)"/><rect x="10" y="117" width="75" height="5" fill="url(#d)"/></svg><svg class="bd"><use href="#jp"/></svg><div class="ck"></div><div class="lb">010.jpg</div></div>

<div class="cell" style="left:413px;top:364px"><svg class="pg" viewBox="0 0 186 128"><rect x="8" y="4" width="78" height="5" fill="url(#d)"/><path d="M8 10h172M64 18v94M123 18v94" stroke="#ccc"/><rect x="8" y="18" width="52" height="92" fill="url(#t)"/><rect x="68" y="18" width="52" height="45" fill="url(#t)"/><rect x="127" y="17" width="33" height="4" fill="url(#d)"/><rect x="127.500" y="22.500" width="53" height="45" fill="#fff" stroke="#aaa"/><path d="M140 60c5-10 15-20 28-30M150 30c8 0 8 8 0 10s-8-10 0-10M135 55c15-8 30-5 40 5M166 30l-5 20" fill="none" stroke="#666"/><rect x="127" y="70" width="53" height="35" fill="url(#t)"/><rect x="8" y="118" width="58" height="5" fill="url(#d)"/></svg><svg class="bd"><use href="#jp"/></svg><div class="ck"></div><div class="lb">011.jpg</div></div>

<div class="cell" style="left:619px;top:364px"><svg class="pg" viewBox="0 0 186 128"><rect x="10" y="5" width="57" height="5" fill="url(#d)"/><path d="M65 13v99M124 13v99M10 116h172" stroke="#ccc"/><rect x="10" y="20" width="50" height="36" fill="url(#t)"/><rect x="9.500" y="58.500" width="53" height="45" fill="#fff" stroke="#aaa"/><path d="M32 100c-5-10-10-15-8-25 2-6 12-12 14-8s8 12 4 25" fill="none" stroke="#777"/><path d="M32 95c2-12 5-22 10-30" stroke="#222" stroke-width="2.500" fill="none"/><rect x="20" y="105" width="40" height="4" fill="url(#d)"/><rect x="69.500" y="22.500" width="52" height="52" fill="#fff" stroke="#aaa"/><rect x="72" y="25" width="47" height="15" fill="url(#d)"/><rect x="72" y="50" width="47" height="18" fill="url(#d)"/><rect x="69" y="69" width="53" height="6" fill="#333"/><rect x="70" y="78" width="52" height="24" fill="url(#t)"/><rect x="70" y="105" width="52" height="4" fill="url(#d)"/><rect x="130" y="36" width="50" height="18" fill="url(#t)"/><rect x="128.500" y="57.500" width="53" height="45" fill="#fff" stroke="#aaa"/><path d="M132 70l45 25" fill="none" stroke="#777"/><path d="M150 75c8 5 18 4 24-2" fill="none" stroke="#222" stroke-width="2.500"/><rect x="155" y="105" width="25" height="4" fill="url(#d)"/><rect x="10" y="117" width="75" height="5" fill="url(#d)"/></svg><svg class="bd"><use href="#jp"/></svg><div class="ck"></div><div class="lb">012.jpg</div></div>

<div class="cell" style="left:1px;top:554px"><svg class="pg" viewBox="0 0 186 128"><rect x="8" y="5" width="48" height="5" fill="url(#d)"/><path d="M8 11h172" stroke="#ccc"/><rect x="7.500" y="18.500" width="53" height="47" fill="#fff" stroke="#aaa"/><rect x="66.500" y="18.500" width="53" height="47" fill="#fff" stroke="#aaa"/><rect x="125.500" y="18.500" width="53" height="47" fill="#fff" stroke="#aaa"/><path d="M20 50c-5-15 5-25 15-25s10 15 5 25zM80 50c-5-15 5-25 15-25s10 15 5 25zM135 30c10 5 30 20 35 25M135 55c5-10 30-25 40-25" fill="none" stroke="#777"/><path d="M34 50l8-22M90 55l12-25M150 40l15-20" stroke="#222" stroke-width="2.500"/><rect x="8" y="69" width="52" height="40" fill="url(#t)"/><rect x="67" y="69" width="52" height="40" fill="url(#t)"/><rect x="126" y="69" width="52" height="40" fill="url(#t)"/></svg><svg class="bd"><use href="#jp"/></svg></div>

<div class="cell" style="left:207px;top:554px"><svg class="pg" viewBox="0 0 186 128"><rect x="9" y="5" width="57" height="5" fill="url(#d)"/><path d="M66 13v99M125 13v99" stroke="#ccc"/><rect x="12" y="55" width="48" height="12" fill="url(#t)"/><rect x="70" y="35" width="52" height="32" fill="url(#t)"/><rect x="130" y="27" width="50" height="40" fill="url(#t)"/><rect x="9.500" y="71.500" width="53" height="50" fill="#fff" stroke="#bbb"/><rect x="68.500" y="71.500" width="53" height="50" fill="#fff" stroke="#bbb"/><rect x="128.500" y="71.500" width="53" height="50" fill="#fff" stroke="#bbb"/><path d="M20 95l15 5 15 0-12 6-8-4zM85 78l12 8 -5 4zM145 80l5 5 20 15 5 8-12-10z" fill="#222"/><path d="M30 80c-10 15-8 30 0 30s12-20 5-30zM85 90c-8 15 0 25 8 25s10-15 8-25zM145 90c-10 15-5 25 5 25s10-15 5-25z" fill="none" stroke="#777"/></svg><svg class="bd"><use href="#jp"/></svg></div>

<div class="cell" style="left:413px;top:554px"><svg class="pg" viewBox="0 0 186 128"><rect x="8" y="5" width="76" height="5" fill="url(#d)"/><path d="M8 12h172M59 22v100M122 22v100" stroke="#ccc"/><rect x="7" y="22" width="26" height="4" fill="url(#d)"/><rect x="7.500" y="27.500" width="53" height="55" fill="#fff" stroke="#aaa"/><path d="M20 80V55l-5-15 10-5 8 10 12 10v10l-10 5zM40 40h10" fill="none" stroke="#666"/><path d="M24 75l15-20" stroke="#222" stroke-width="2.500"/><rect x="7" y="88" width="53" height="34" fill="url(#t)"/><rect x="66" y="23" width="54" height="60" fill="url(#t)"/><rect x="66" y="92" width="54" height="30" fill="url(#t)"/><rect x="125" y="22" width="53" height="20" fill="url(#t)"/><rect x="125" y="52" width="53" height="28" fill="url(#t)"/><rect x="125" y="90" width="53" height="32" fill="url(#t)"/></svg><svg class="bd"><use href="#jp"/></svg></div>

<div class="cell" style="left:619px;top:554px"><svg class="pg" viewBox="0 0 186 128"><rect x="10" y="5" width="56" height="5" fill="url(#d)"/><path d="M65 13v99M125 13v99" stroke="#ccc"/><rect x="15" y="25" width="45" height="45" fill="url(#t)"/><rect x="9.500" y="72.500" width="53" height="50" fill="#fff" stroke="#bbb"/><path d="M25 115c-6-15-4-35 8-40s25 10 15 40" fill="none" stroke="#777"/><path d="M26 105c5-12 20-15 24-5s-8 20-15 18-12-5-9-13z" fill="#222"/><rect x="70" y="35" width="50" height="87" fill="url(#t)"/><rect x="130" y="72" width="50" height="50" fill="url(#t)"/></svg><svg class="bd"><use href="#jp"/></svg></div>
</div>

<!-- right scrollbar -->
<div class="a" style="left:1164px;top:163px;width:17px;height:678px;background:#f6f6f0"></div>
<div class="a sb" style="left:1165px;top:165px;width:15px;height:15px"><svg class="a" style="left:1px;top:3px" width="12" height="8"><path d="M2 6l4-4 4 4" fill="none" stroke="#4d6185" stroke-width="2"/></svg></div>
<div class="a sb" style="left:1165px;top:197px;width:15px;height:50px"><div class="a" style="left:3px;top:20px;width:7px;height:7px;background:repeating-linear-gradient(#eef3fe 0 1px,#8ea6d8 1px 2px)"></div></div>
<div class="a sb" style="left:1165px;top:825px;width:15px;height:15px"><svg class="a" style="left:1px;top:4px" width="12" height="8"><path d="M2 2l4 4 4-4" fill="none" stroke="#4d6185" stroke-width="2"/></svg></div>

<!-- status bar -->
<div class="a" style="left:4px;top:841px;width:1177px;height:23px;background:#9c9c9c;border-top:1px solid #858585"></div>
<div class="l" style="left:10px;top:847px">Total 173 items&nbsp; (53.3 MB)</div>
<div class="a" style="left:147px;top:845px;width:1px;height:17px;background:#e6e6e6"></div>
<svg class="a" style="left:153px;top:846px" width="16" height="16"><use href="#jp"/></svg>
<div class="l" style="left:172px;top:847px">001.jpg</div>
<div class="a" style="left:220px;top:845px;width:1px;height:17px;background:#e6e6e6"></div>
<div class="l" style="left:225px;top:847px">194.8 KB, Modified Date: 21/2/2566 7:35:05</div>
<div class="a" style="left:450px;top:845px;width:1px;height:17px;background:#e6e6e6"></div>
<div class="l" style="left:456px;top:847px">1636x1128x24b</div>
<div class="a" style="left:544px;top:845px;width:1px;height:17px;background:#e6e6e6"></div>

<!-- dropdown menu -->
<div class="a" style="left:586px;top:162px;width:159px;height:187px;background:#e2e2e2;border:1px solid #000;box-shadow:3px 3px 2px rgba(0,0,0,.45)"></div>
<div class="a" style="left:587px;top:163px;width:21px;height:185px;background:linear-gradient(90deg,#c2c2c2,#9d9d9d)"></div>
<div class="a" style="left:587px;top:162px;width:59px;height:1px;background:#f8c070"></div>
<div class="a" style="left:588px;top:208px;width:20px;height:21px;background:#f9b565;border:1px solid #f39a3a;border-right:0"></div>
<div class="a" style="left:595px;top:216px;width:5px;height:5px;border-radius:50%;background:#000"></div>
<div class="a" style="left:608px;top:208px;width:136px;height:21px;background:#fdedc5;border:1px solid #f7a84d"></div>
<div class="mi" style="top:167px">Th<u>u</u>mbs + Details</div><div class="ms" style="left:720px;top:167px">F6</div>
<div class="mi" style="top:189px"><u>F</u>ilmstrip</div><div class="ms" style="left:720px;top:189px">F7</div>
<div class="mi" style="top:211px;letter-spacing:-.4px"><u>T</u>humbnails</div><div class="ms" style="left:720px;top:211px">F8</div>
<div class="mi" style="top:233px">Til<u>e</u>s</div><div class="ms" style="left:720px;top:233px">F9</div>
<div class="mi" style="top:255px"><u>I</u>cons</div><div class="ms" style="left:714px;top:255px">F10</div>
<div class="mi" style="top:277px"><u>L</u>ist</div><div class="ms" style="left:714px;top:277px">F11</div>
<div class="mi" style="top:299px"><u>D</u>etails</div><div class="ms" style="left:714px;top:299px">F12</div>
<div class="a" style="left:617px;top:321px;width:127px;height:1px;background:#8a8a8a"></div>
<div class="mi" style="top:329px"><u>C</u>hoose Details...</div>
<svg class="a" style="left:669px;top:220px" width="24" height="42"><path d="M9 2l8 11-4 1 6 23-3 1-7-23-4 1z" fill="#f0141e"/></svg>
</body></html>
